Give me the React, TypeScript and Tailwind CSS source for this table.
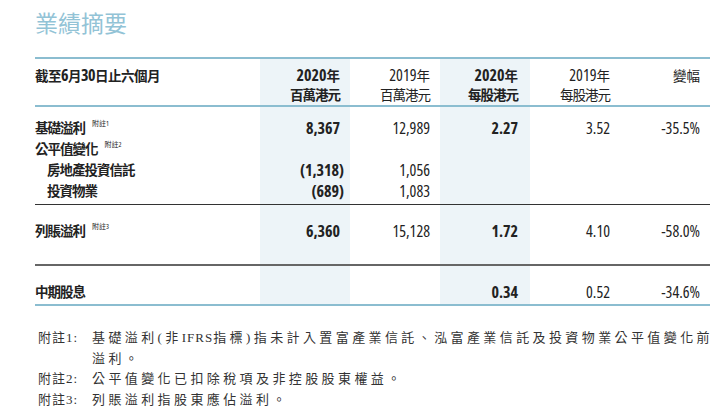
import React from "react";

const TABLE_FONT = "font-['Open_Sans','Noto_Sans_CJK_TC',sans-serif] [font-stretch:75%]";
const NOTE_FONT = "font-['Liberation_Serif','Noto_Sans_CJK_TC',serif]";

const COLS = [
  { w: "w-[90px]", pr: "pr-[10px]", shade: true },
  { w: "w-[90px]", pr: "pr-[10px]", shade: false },
  { w: "w-[90px]", pr: "pr-[12px]", shade: true },
  { w: "w-[90px]", pr: "pr-[10px]", shade: false },
  { w: "w-[90px]", pr: "pr-[10px]", shade: false },
];

const BOLD_COLS = [0, 2];

type Row = { label: string; note?: string; indent?: boolean; values: string[] };

const SECTIONS: { rows: Row[]; cls: string; pt: string }[] = [
  {
    cls: "h-[98px] border-b border-[#333]",
    pt: "pt-[11px]",
    rows: [
      { label: "基礎溢利", note: "附註1", values: ["8,367", "12,989", "2.27", "3.52", "-35.5%"] },
      { label: "公平值變化", note: "附註2", values: ["", "", "", "", ""] },
      { label: "房地產投資信託", indent: true, values: ["(1,318)", "1,056", "", "", ""] },
      { label: "投資物業", indent: true, values: ["(689)", "1,083", "", "", ""] },
    ],
  },
  {
    cls: "h-[61px] border-b-2 border-[#666]",
    pt: "pt-[16px]",
    rows: [{ label: "列賬溢利", note: "附註3", values: ["6,360", "15,128", "1.72", "4.10", "-58.0%"] }],
  },
  {
    cls: "h-[40px] border-b-2 border-[#8bbdd0]",
    pt: "pt-[16px]",
    rows: [{ label: "中期股息", values: ["", "", "0.34", "0.52", "-34.6%"] }],
  },
];

function Num({ v }: { v: string }) {
  if (!v) return <span>&nbsp;</span>;
  if (v.startsWith("(")) {
    return (
      <span>
        {v.slice(0, -1)}
        <span className="mr-[-4px]">)</span>
      </span>
    );
  }
  return <span>{v}</span>;
}

function Header() {
  const heads = [
    ["2020", "年", "百萬港元", true],
    ["2019", "年", "百萬港元", false],
    ["2020", "年", "每股港元", true],
    ["2019", "年", "每股港元", false],
    ["", "變幅", "", false],
  ] as const;
  return (
    <div className="flex h-[50px] border-y-2 border-[#8bbdd0]">
      <div className="w-[225px] pt-[7px] text-[13.5px] font-bold leading-[19px] tracking-[-0.5px]">
        截至<span className="text-[16px]">6</span>月<span className="text-[16px]">30</span>日止六個月
      </div>
      {heads.map(([y, s, u, b], i) => (
        <div
          key={i}
          className={`${COLS[i].w} ${COLS[i].pr} ${COLS[i].shade ? "bg-[#edf4f8]" : ""} pt-[7px] text-right leading-[19px] ${b ? "font-bold" : "font-normal"}`}
        >
          <div>
            <span className="text-[16px]">{y}</span>
            <span className="text-[13.5px]">{s}</span>
          </div>
          <div className="text-[13.5px] tracking-[-1px]">{u}</div>
        </div>
      ))}
    </div>
  );
}

export default function App() {
  return (
    <div className="w-[722px] h-[415px] bg-white text-[#222] overflow-hidden">
      <div className="pl-[35px] pr-[12px]">
        <h1 className="pt-[9px] h-[57px] text-[23px] leading-[26px] font-normal text-[#92c3d6] font-['Noto_Sans_CJK_TC',sans-serif]">
          業績摘要
        </h1>
        <div className={`${TABLE_FONT} w-[675px]`}>
          <Header />
          {SECTIONS.map((sec, si) => (
            <div key={si} className={`flex ${sec.cls}`}>
              <div className={`w-[225px] ${sec.pt} text-[13.5px] font-semibold leading-[21px] tracking-[-1px]`}>
                {sec.rows.map((r, ri) => (
                  <div key={ri} className={`flex items-start ${r.indent ? "pl-[12px]" : ""}`}>
                    <span>{r.label}</span>
                    {r.note && (
                      <span className="ml-[7px] mt-[1px] text-[7px] leading-[10px] font-normal tracking-normal">{r.note}</span>
                    )}
                  </div>
                ))}
              </div>
              {COLS.map((c, ci) => (
                <div
                  key={ci}
                  className={`${c.w} ${c.pr} ${c.shade ? "bg-[#edf4f8]" : ""} ${sec.pt} text-right text-[16px] leading-[21px] ${BOLD_COLS.includes(ci) ? "font-bold" : "font-normal"}`}
                >
                  {sec.rows.map((r, ri) => (
                    <div key={ri}>
                      <Num v={r.values[ci]} />
                    </div>
                  ))}
                </div>
              ))}
            </div>
          ))}
        </div>
      </div>
      <div className={`${NOTE_FONT} mt-[22px] pl-[38px] text-[13px] leading-[20.5px] text-[#333] tracking-[3.4px]`}>
        <div className="flex">
          <span className="w-[54px] shrink-0 tracking-[1px]">附註1:</span>
          <div className="whitespace-nowrap">
            <div>
              基礎溢利(非<span className="tracking-[1px]">IFRS</span>指標)指未計入置富產業信託、泓富產業信託及投資物業公平值變化前
            </div>
            <div>溢利。</div>
          </div>
        </div>
        <div className="flex">
          <span className="w-[54px] shrink-0 tracking-[1px]">附註2:</span>
          <span>公平值變化已扣除稅項及非控股股東權益。</span>
        </div>
        <div className="flex">
          <span className="w-[54px] shrink-0 tracking-[1px]">附註3:</span>
          <span>列賬溢利指股東應佔溢利。</span>
        </div>
      </div>
    </div>
  );
}
